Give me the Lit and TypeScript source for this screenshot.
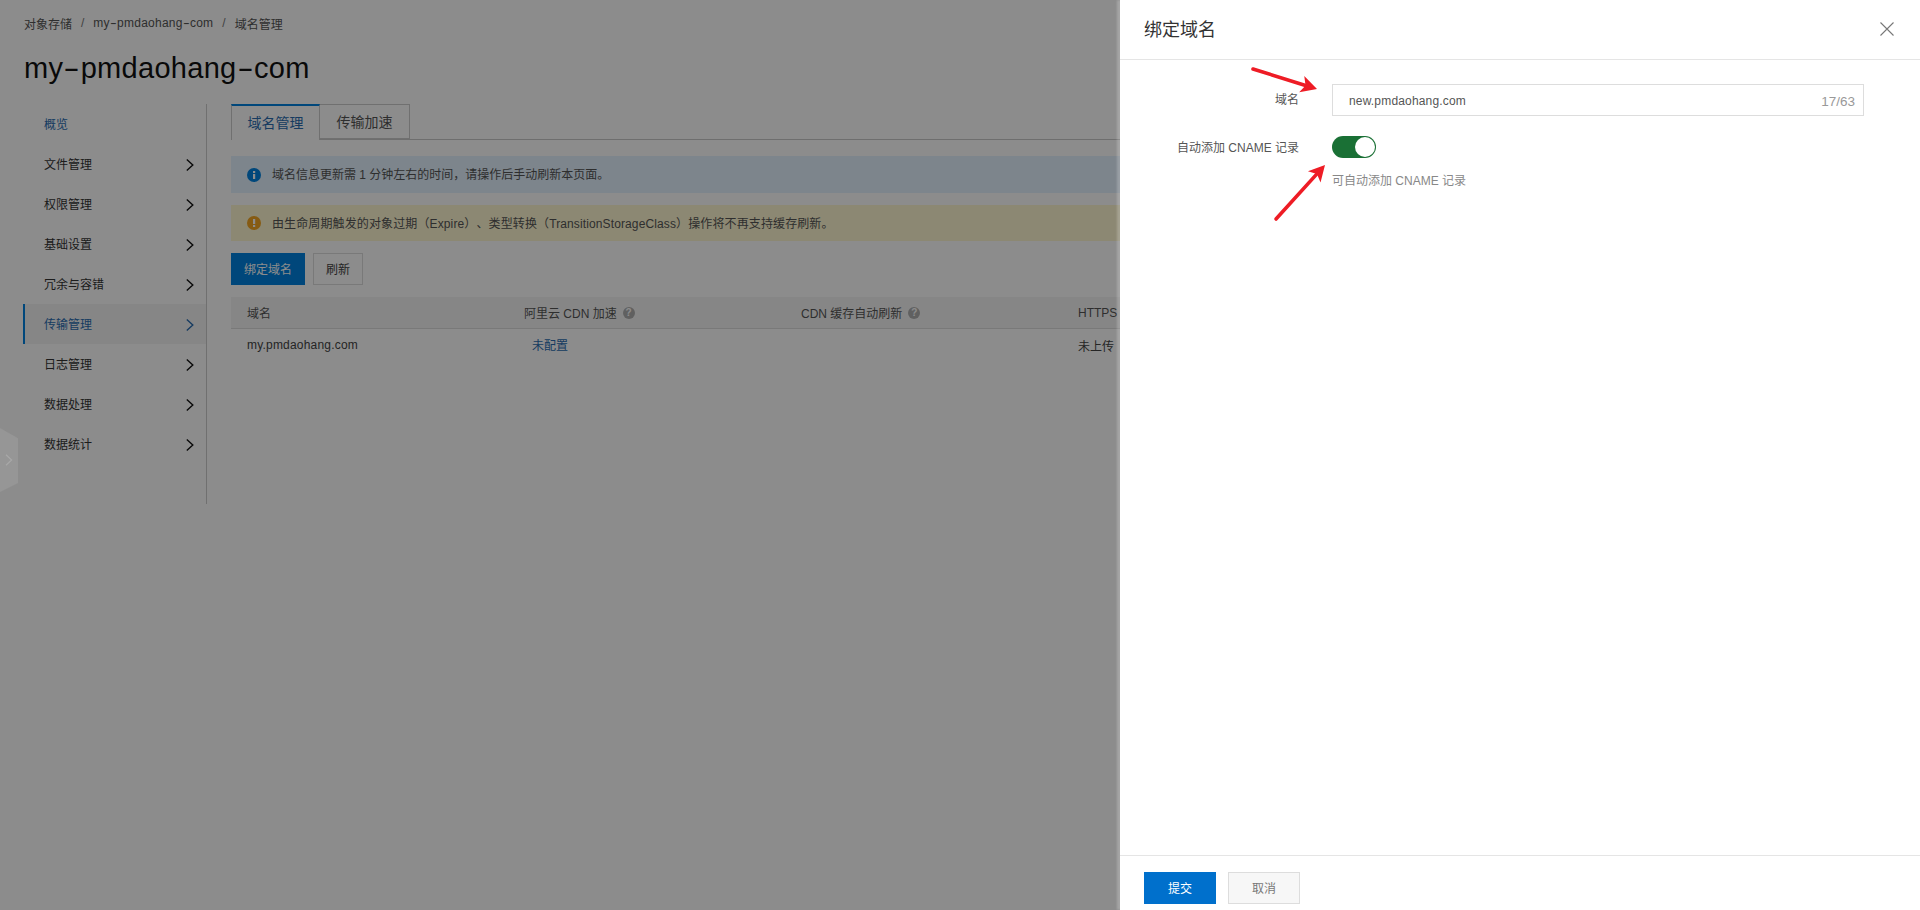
import { LitElement, html, css, svg } from "lit";
import { customElement } from "lit/decorators.js";

const MENU = [
  { label: "概览", arrow: false, state: "link" },
  { label: "文件管理", arrow: true, state: "" },
  { label: "权限管理", arrow: true, state: "" },
  { label: "基础设置", arrow: true, state: "" },
  { label: "冗余与容错", arrow: true, state: "" },
  { label: "传输管理", arrow: true, state: "active" },
  { label: "日志管理", arrow: true, state: "" },
  { label: "数据处理", arrow: true, state: "" },
  { label: "数据统计", arrow: true, state: "" },
];

const chevron = html`<svg class="chev" width="8" height="12" viewBox="0 0 8 12"><path d="M.8 .6 6.8 6 .8 11.4" fill="none" stroke="currentColor" stroke-width="1.4"/></svg>`;
const help = html`<span class="help">?</span>`;
const BUCKET = html`my<span class="hy">-</span>pmdaohang<span class="hy">-</span>com`;

const arrow = (x1: number, y1: number, x2: number, y2: number) => {
  const a = Math.atan2(y2 - y1, x2 - x1);
  const L = 16, W = 8.5;
  const bx = x2 - L * Math.cos(a), by = y2 - L * Math.sin(a);
  const nx = -Math.sin(a), ny = Math.cos(a);
  const nbx = x2 - (L - 4) * Math.cos(a), nby = y2 - (L - 4) * Math.sin(a);
  return svg`<line x1=${x1} y1=${y1} x2=${nbx} y2=${nby} stroke="#ee1c25" stroke-width="3.6" stroke-linecap="round"/>
    <polygon fill="#ee1c25" points="${x2},${y2} ${bx + nx * W},${by + ny * W} ${nbx},${nby} ${bx - nx * W},${by - ny * W}"/>`;
};

@customElement("app-root")
export class AppRoot extends LitElement {
  static styles = css`
    :host { display: block; position: relative; width: 1920px; height: 910px; overflow: hidden; background: #fff;
      font-family: "Liberation Sans", "Noto Sans CJK SC", sans-serif; font-size: 12px; color: #333; text-spacing-trim: space-all; }
    * { box-sizing: border-box; }
    .hy { display: inline-block; width: .6em; text-align: center; transform: scaleX(1.7); }
    .page { padding: 0 23px; width: 1920px; }
    .crumbs { display: flex; gap: 9px; height: 48px; align-items: center; padding: 0 0 2px 1px; color: #555; }
    .crumbs .b { letter-spacing: .25px; }
    .crumbs i { font-style: normal; color: #777; }
    h1 { margin: 0; height: 56px; padding-left: 1px; font-weight: 400; font-size: 29px; line-height: 41px; color: #111; letter-spacing: .3px; }
    .main { display: flex; gap: 24px; }
    .side { width: 184px; height: 400px; border-right: 1px solid #ccc; flex: none; }
    .item { height: 40px; display: flex; align-items: center; justify-content: space-between; padding: 0 12px 0 21px; color: #333; }
    .item span { padding-bottom: 2px; }
    .item.link { color: #2a6cb0; }
    .item.active { color: #2a6cb0; background: #f5f5f5; border-left: 2px solid #0082e0; padding-left: 19px; }
    .chev { color: #111; flex: none; margin-top: 2px; }
    .active .chev { color: #2a6cb0; }
    .content { flex: 1; min-width: 0; }
    .tabs { display: flex; height: 36px; border-bottom: 1px solid #c8c8c8; font-size: 14px; margin-bottom: 16px; }
    .tab { width: 90px; height: 35px; display: flex; align-items: center; justify-content: center; border: 1px solid #ccc; border-left: 0; color: #555; padding-bottom: 2px; }
    .tab.on { width: 89px; height: 36px; border: 1px solid #ccc; border-top: 2px solid #0082e0; border-bottom: 0; background: #fff; color: #2a6cb0; }
    .note { display: flex; align-items: center; gap: 11px; padding: 0 16px; margin-bottom: 12px; color: #555; }
    .note span { padding-bottom: 2px; }
    .note.info { height: 37px; background: #e3f2ff; }
    .note.warn { height: 36px; background: #fff8d1; letter-spacing: .12px; }
    .dot { width: 14px; height: 14px; flex: none; display: block; }
    .actions { display: flex; gap: 8px; margin-bottom: 12px; }
    .btn { height: 32px; display: flex; align-items: center; justify-content: center; border: 1px solid #ddd; background: #fff; color: #444; padding-bottom: 2px; }
    .btn.primary { background: #0082e0; border-color: #0082e0; color: #fff; }
    .bind { width: 74px; }
    .refresh { width: 50px; }
    .row { display: grid; grid-template-columns: 277px 277px 277px 277px; align-items: center; }
    .row > div { padding-left: 16px; display: flex; align-items: center; gap: 6px; white-space: nowrap; }
    .thead { height: 32px; background: #f5f5f5; border-bottom: 1px solid #ddd; color: #555; }
    .tbody { height: 32px; color: #444; }
    .tbody .domain { letter-spacing: .2px; }
    .tbody .cfg { padding-left: 24px; color: #2a6cb0; padding-bottom: 1px; }
    .help { width: 12px; height: 12px; border-radius: 50%; background: #b0b0b0; color: #fff; font-size: 10px; font-weight: 700; line-height: 12px; text-align: center; flex: none; }
    .veil { position: absolute; inset: 0; background: rgba(0, 0, 0, .45); }
    .hex { position: absolute; left: 0; top: 428px; width: 18px; height: 64px; background: #969696; clip-path: polygon(0 0, 100% 16%, 100% 86%, 0 100%); color: #a8a8a8; display: flex; align-items: center; padding-left: 5px; }
    .drawer { position: absolute; top: 0; right: 0; bottom: 0; width: 800px; background: #fff; display: flex; flex-direction: column; box-shadow: -3px 0 2px rgba(255, 255, 255, .22); }
    .dh { height: 60px; flex: none; border-bottom: 1px solid #e5e5e5; display: flex; align-items: center; justify-content: space-between; padding: 0 25px 0 24px; font-size: 18px; color: #333; }
    .dh span { padding-bottom: 4px; }
    .close { display: block; color: #777; margin-bottom: 1px; }
    .db { flex: 1; padding-top: 24px; }
    .f { display: flex; gap: 33px; }
    .f1 { height: 52px; }
    .lab { width: 179px; text-align: right; color: #555; flex: none; }
    .f1 .lab { padding-top: 6px; }
    .f2 .lab { padding-top: 2px; }
    .inp { width: 532px; height: 32px; border: 1px solid #ddd; display: flex; align-items: center; justify-content: space-between; padding: 2px 8px 0 16px; color: #555; letter-spacing: .17px; }
    .cnt { color: #999; font-size: 13.5px; letter-spacing: 0; }
    .sw { width: 44px; height: 22px; border-radius: 11px; background: #1a7035; padding: 1px; display: flex; justify-content: flex-end; }
    .sw span { width: 20px; height: 20px; background: #fff; border-radius: 50%; display: block; }
    .hint { margin-top: 13px; color: #888; }
    .df { height: 55px; flex: none; border-top: 1px solid #e5e5e5; display: flex; gap: 12px; padding: 16px 24px 0; }
    .df .btn { width: 72px; }
    .df .primary { background: #0070cc; border-color: #0070cc; }
    .df .cancel { background: #f7f7f7; color: #777; }
    .marks { position: absolute; left: 0; top: 0; pointer-events: none; }
  `;

  render() {
    return html`
      <div class="page">
        <div class="crumbs"><span>对象存储</span><i>/</i><span class="b">${BUCKET}</span><i>/</i><span>域名管理</span></div>
        <h1>${BUCKET}</h1>
        <div class="main">
          <nav class="side">
            ${MENU.map((m) => html`<div class="item ${m.state}"><span>${m.label}</span>${m.arrow ? chevron : ""}</div>`)}
          </nav>
          <section class="content">
            <div class="tabs"><div class="tab on">域名管理</div><div class="tab">传输加速</div></div>
            <div class="note info">
              <svg class="dot" viewBox="0 0 14 14"><circle cx="7" cy="7" r="7" fill="#0082e0"/><rect x="6" y="3" width="2.2" height="2" fill="#fff"/><rect x="6" y="6" width="2.2" height="5" fill="#fff"/></svg>
              <span>域名信息更新需 1 分钟左右的时间，请操作后手动刷新本页面。</span>
            </div>
            <div class="note warn">
              <svg class="dot" viewBox="0 0 14 14"><circle cx="7" cy="7" r="7" fill="#f5a623"/><rect x="6" y="3" width="2.2" height="5" fill="#fff"/><rect x="6" y="9" width="2.2" height="2" fill="#fff"/></svg>
              <span>由生命周期触发的对象过期（Expire）、类型转换（TransitionStorageClass）操作将不再支持缓存刷新。</span>
            </div>
            <div class="actions"><div class="btn primary bind">绑定域名</div><div class="btn refresh">刷新</div></div>
            <div class="row thead"><div>域名</div><div>阿里云 CDN 加速 ${help}</div><div>CDN 缓存自动刷新 ${help}</div><div>HTTPS</div></div>
            <div class="row tbody"><div class="domain">my.pmdaohang.com</div><div class="cfg">未配置</div><div></div><div>未上传</div></div>
          </section>
        </div>
      </div>
      <div class="veil"></div>
      <div class="hex"><svg width="8" height="12" viewBox="0 0 8 12"><path d="M1 .8 6.6 6 1 11.2" fill="none" stroke="currentColor" stroke-width="1.2"/></svg></div>
      <aside class="drawer">
        <header class="dh"><span>绑定域名</span>
          <svg class="close" width="16" height="16" viewBox="0 0 16 16"><path d="M1.5 1.5 14.5 14.5M14.5 1.5 1.5 14.5" stroke="currentColor" stroke-width="1.1" fill="none"/></svg>
        </header>
        <div class="db">
          <div class="f f1"><div class="lab">域名</div><div class="inp"><span>new.pmdaohang.com</span><span class="cnt">17/63</span></div></div>
          <div class="f f2"><div class="lab">自动添加 CNAME 记录</div>
            <div><div class="sw"><span></span></div><div class="hint">可自动添加 CNAME 记录</div></div>
          </div>
        </div>
        <footer class="df"><div class="btn primary">提交</div><div class="btn cancel">取消</div></footer>
      </aside>
      <svg class="marks" width="1920" height="910">${arrow(1253, 69, 1317, 89)}${arrow(1276, 219, 1325, 165)}</svg>
    `;
  }
}
